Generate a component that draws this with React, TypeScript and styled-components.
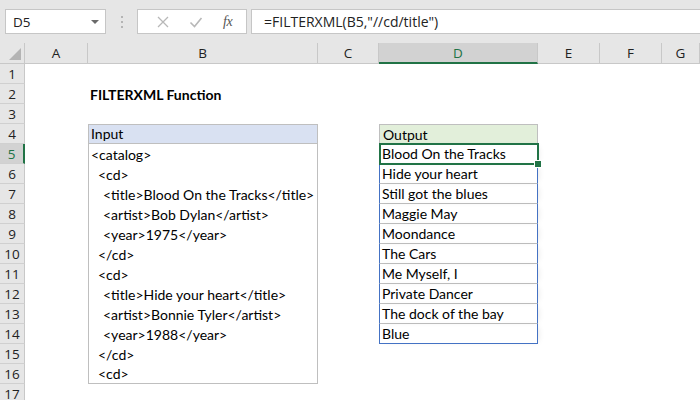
import * as React from "react";
import styled, { createGlobalStyle } from "styled-components";

const GlobalStyle = createGlobalStyle`
  html, body {
    margin: 0;
    padding: 0;
    background: #ffffff;
  }
  body {
    width: 700px;
    height: 400px;
    overflow: hidden;
    font-family: Lato, "Liberation Sans", sans-serif;
  }
`;

const Window = styled.div`
  width: 700px;
  height: 400px;
  display: flex;
  flex-direction: column;
  overflow: hidden;
`;

const Toolbar = styled.div`
  height: 43px;
  flex: none;
  box-sizing: border-box;
  background: #e6e6e6;
  display: flex;
  align-items: center;
  padding: 0 0 0 5px;
`;

const NameBox = styled.div`
  width: 101px;
  height: 25px;
  box-sizing: border-box;
  background: #ffffff;
  border: 1px solid #c6c6c6;
  display: flex;
  align-items: center;
  justify-content: space-between;
  padding: 0 6px 0 7px;
  font-family: "Open Sans", "Liberation Sans", sans-serif;
  font-size: 13.5px;
  color: #222;
`;

const Caret = styled.span`
  width: 0;
  height: 0;
  border-left: 4px solid transparent;
  border-right: 4px solid transparent;
  border-top: 4px solid #6a6a6a;
  margin-top: 1px;
`;

const Grip = styled.div`
  width: 31px;
  height: 25px;
  display: flex;
  flex-direction: column;
  align-items: center;
  justify-content: center;
  gap: 3px;
  span {
    width: 2px;
    height: 2px;
    background: #b4b4b4;
  }
`;

const FxBox = styled.div`
  width: 110px;
  height: 25px;
  box-sizing: border-box;
  background: #ffffff;
  border: 1px solid #c6c6c6;
  display: flex;
  align-items: center;
  justify-content: space-around;
  padding: 0 4px 0 8px;
`;

const FxLabel = styled.span`
  font-family: "Liberation Serif", serif;
  font-style: italic;
  font-size: 14px;
  color: #555;
  letter-spacing: -0.5px;
`;

const FormulaInput = styled.div`
  flex: 1;
  height: 25px;
  margin-left: 4px;
  box-sizing: border-box;
  background: #ffffff;
  border: 1px solid #c6c6c6;
  border-right: none;
  display: flex;
  align-items: center;
  padding-left: 12px;
  font-family: "Open Sans", "Liberation Sans", sans-serif;
  font-size: 14px;
  color: #222;
`;

const Sheet = styled.div`
  display: grid;
  grid-template-columns: 25px 63px 230px 61px 159px 62px 62px 1fr;
  grid-template-rows: 21px;
  grid-auto-rows: 20px;
`;

const ColHead = styled.div<{ $active?: boolean }>`
  box-sizing: border-box;
  position: relative;
  background: ${(p) => (p.$active ? "#d2d2d2" : "#e6e6e6")};
  border-right: 1px solid #c8c8c8;
  border-bottom: ${(p) => (p.$active ? "2px solid #217346" : "1px solid #c8c8c8")};
  display: flex;
  align-items: center;
  justify-content: center;
  font-family: "Open Sans", "Liberation Sans", sans-serif;
  font-size: 13.5px;
  color: ${(p) => (p.$active ? "#217346" : "#222")};
`;

const Corner = styled.span`
  position: absolute;
  right: 3px;
  bottom: 3px;
  width: 0;
  height: 0;
  border-left: 12px solid transparent;
  border-bottom: 12px solid #b4b4b4;
`;

const RowHead = styled.div<{ $active?: boolean }>`
  box-sizing: border-box;
  background: ${(p) => (p.$active ? "#d2d2d2" : "#e6e6e6")};
  border-right: ${(p) => (p.$active ? "2px solid #217346" : "1px solid #c8c8c8")};
  border-bottom: 1px solid #d0d0d0;
  display: flex;
  align-items: center;
  justify-content: center;
  font-family: "Open Sans", "Liberation Sans", sans-serif;
  font-size: 13.5px;
  color: ${(p) => (p.$active ? "#217346" : "#222")};
`;

type Edge = string | undefined;

const Cell = styled.div<{
  $bg?: string;
  $top?: Edge;
  $bottom?: Edge;
  $left?: Edge;
  $right?: Edge;
  $bold?: boolean;
  $indent?: number;
  $shadow?: boolean;
}>`
  position: relative;
  box-sizing: border-box;
  background: ${(p) => p.$bg || "transparent"};
  border-top: ${(p) => (p.$top ? `1px solid ${p.$top}` : "none")};
  border-bottom: ${(p) => (p.$bottom ? `1px solid ${p.$bottom}` : "none")};
  border-left: ${(p) => (p.$left ? `1px solid ${p.$left}` : "none")};
  border-right: ${(p) => (p.$right ? `1px solid ${p.$right}` : "none")};
  box-shadow: ${(p) => (p.$shadow ? "3px 0 6px -3px rgba(0,0,0,0.12)" : "none")};
  padding-left: ${(p) => p.$indent ?? 2}px;
  display: flex;
  align-items: flex-end;
  padding-bottom: 1px;
  font-size: 14px;
  font-weight: ${(p) => (p.$bold ? 700 : 400)};
  color: #000;
  white-space: pre;
`;

const Selection = styled.div`
  position: absolute;
  left: -1px;
  top: -2px;
  right: -2px;
  bottom: -2px;
  border: 2px solid #217346;
  pointer-events: none;
  z-index: 3;
`;

const FillHandle = styled.span`
  position: absolute;
  right: -5px;
  bottom: -5px;
  width: 6px;
  height: 6px;
  background: #217346;
  border: 1px solid #fff;
`;

const GRAY = "#bfbfbf";
const BLUE = "#4472c4";

const cols = ["A", "B", "C", "D", "E", "F", "G"];

const inputLines: [string, number][] = [
  ["<catalog>", 2],
  ["<cd>", 9],
  ["<title>Blood On the Tracks</title>", 14],
  ["<artist>Bob Dylan</artist>", 14],
  ["<year>1975</year>", 14],
  ["</cd>", 9],
  ["<cd>", 9],
  ["<title>Hide your heart</title>", 14],
  ["<artist>Bonnie Tyler</artist>", 14],
  ["<year>1988</year>", 14],
  ["</cd>", 9],
  ["<cd>", 9],
];

const outputs = [
  "Blood On the Tracks",
  "Hide your heart",
  "Still got the blues",
  "Maggie May",
  "Moondance",
  "The Cars",
  "Me Myself, I",
  "Private Dancer",
  "The dock of the bay",
  "Blue",
];

function renderB(row: number) {
  if (row === 2) return <Cell $bold>FILTERXML Function</Cell>;
  if (row === 4)
    return (
      <Cell $bg="#d9e1f2" $top={GRAY} $bottom={GRAY} $left={GRAY} $right={GRAY}>
        Input
      </Cell>
    );
  if (row >= 5 && row <= 16) {
    const [text, indent] = inputLines[row - 5];
    return (
      <Cell $left={GRAY} $right={GRAY} $bottom={row === 16 ? GRAY : undefined} $indent={indent}>
        {text}
      </Cell>
    );
  }
  return <Cell />;
}

function renderD(row: number) {
  if (row === 4)
    return (
      <Cell $bg="#e2efda" $top={GRAY} $left={GRAY} $right={GRAY} $indent={3}>
        Output
      </Cell>
    );
  if (row >= 5 && row <= 14) {
    return (
      <Cell
        $top={row === 5 ? BLUE : undefined}
        $bottom={row === 14 ? BLUE : GRAY}
        $left={BLUE}
        $right={BLUE}
        $indent={2}
        $shadow
      >
        {outputs[row - 5]}
        {row === 5 && (
          <Selection>
            <FillHandle />
          </Selection>
        )}
      </Cell>
    );
  }
  return <Cell />;
}

export default function App() {
  const rows = Array.from({ length: 17 }, (_, i) => i + 1);
  return (
    <Window>
      <GlobalStyle />
      <Toolbar>
        <NameBox>
          D5
          <Caret />
        </NameBox>
        <Grip>
          <span />
          <span />
          <span />
        </Grip>
        <FxBox>
          <svg width="14" height="14" viewBox="0 0 14 14">
            <path d="M2 2 L12 12 M12 2 L2 12" stroke="#b8b8b8" strokeWidth="1.3" fill="none" />
          </svg>
          <svg width="14" height="14" viewBox="0 0 14 14">
            <path d="M1.5 7.5 L5.5 11.5 L12.5 3" stroke="#b8b8b8" strokeWidth="1.6" fill="none" />
          </svg>
          <FxLabel>fx</FxLabel>
        </FxBox>
        <FormulaInput>=FILTERXML(B5,"//cd/title")</FormulaInput>
      </Toolbar>
      <Sheet>
        <ColHead>
          <Corner />
        </ColHead>
        {cols.map((c) => (
          <ColHead key={c} $active={c === "D"}>
            {c}
          </ColHead>
        ))}
        {rows.map((r) => (
          <React.Fragment key={r}>
            <RowHead $active={r === 5}>{r}</RowHead>
            <Cell />
            {renderB(r)}
            <Cell />
            {renderD(r)}
            <Cell />
            <Cell />
            <Cell />
          </React.Fragment>
        ))}
      </Sheet>
    </Window>
  );
}
